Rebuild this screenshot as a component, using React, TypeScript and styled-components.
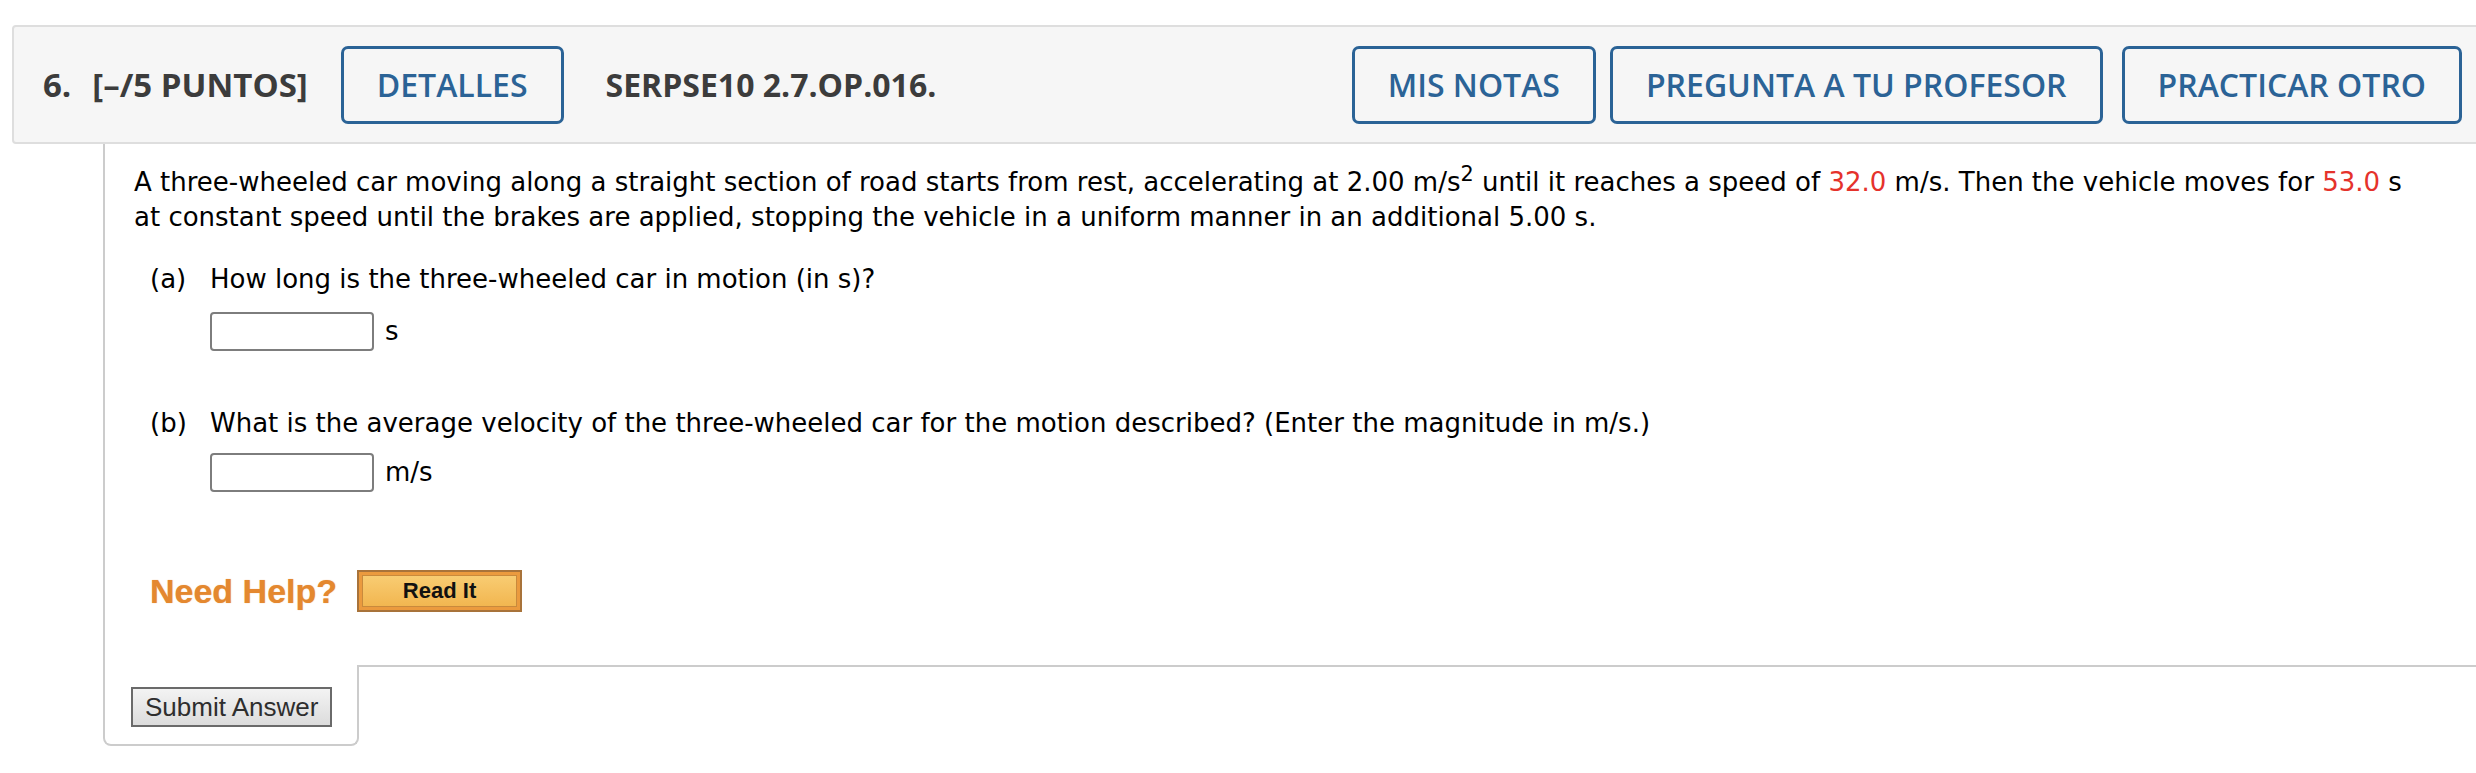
import React from "react";
import styled, { createGlobalStyle } from "styled-components";

const GlobalStyle = createGlobalStyle`
  html, body {
    margin: 0;
    padding: 0;
    background: #ffffff;
    overflow-x: hidden;
  }
  body {
    font-family: "DejaVu Sans", Verdana, sans-serif;
  }
`;

// Sub-component for the grey question header
const HeaderBar = styled.header`
  display: flex;
  align-items: center;
  height: 115px;
  margin-top: 25px;
  padding: 0 44px 0 29px;
  background: #f6f6f6;
  border: 2px solid #dedede;
  border-radius: 4px;
  font-family: "Open Sans", "Liberation Sans", sans-serif;
  color: #3c3c3c;
`;

const Number = styled.span`
  font-size: 33px;
  font-weight: 700;
  margin-right: 21px;
`;

const Points = styled.span`
  font-size: 33px;
  font-weight: 700;
  margin-right: 33px;
`;

const Code = styled.span`
  font-size: 32px;
  font-weight: 700;
  margin-left: 42px;
`;

const Spacer = styled.div`
  flex: 1;
`;

const OutlineButton = styled.button<{ $gap?: number }>`
  height: 78px;
  padding: 0 33px;
  margin-left: ${(p) => p.$gap ?? 0}px;
  background: transparent;
  border: 3px solid #2b6396;
  border-radius: 7px;
  color: #2b6396;
  font-family: "Open Sans", "Liberation Sans", sans-serif;
  font-size: 32px;
  font-weight: 600;
  cursor: pointer;
`;

const Frame = styled.div`
  margin-left: 12px;
  width: calc(100vw + 20px);
`;

const Body = styled.section`
  margin-left: 91px;
  padding: 21px 0 53px 29px;
  border-left: 2px solid #cccccc;
  color: #000000;
  font-size: 26px;
  line-height: 35px;
`;

const Intro = styled.p`
  margin: 0 0 27px;
`;

const Hot = styled.span`
  color: #e5322b;
`;

const Sup = styled.sup`
  font-size: 0.8em;
  line-height: 0;
  vertical-align: 0.5em;
`;

const Part = styled.div`
  display: grid;
  grid-template-columns: 60px auto;
  margin-left: 16px;
  margin-bottom: 55px;
`;

const Letter = styled.span``;

const AnswerRow = styled.div<{ $top: number }>`
  grid-column: 2;
  display: flex;
  align-items: center;
  gap: 11px;
  margin-top: ${(p) => p.$top}px;
`;

const Field = styled.input`
  width: 164px;
  height: 39px;
  box-sizing: border-box;
  border: 2px solid #7d7d7d;
  border-radius: 4px;
  background: #ffffff;
`;

const HelpRow = styled.div`
  display: flex;
  align-items: center;
  gap: 20px;
  margin: 78px 0 0 16px;
`;

const HelpLabel = styled.span`
  font-family: "Liberation Sans", Arial, sans-serif;
  font-weight: 700;
  font-size: 34px;
  line-height: 40px;
  color: #e4882f;
  text-shadow: 0 0 1px rgba(228, 136, 47, 0.7);
`;

const ReadButton = styled.button`
  width: 165px;
  height: 42px;
  padding: 3px;
  background: #eb9a3e;
  border: 2px solid #a8733a;
  cursor: pointer;

  span {
    display: flex;
    align-items: center;
    justify-content: center;
    height: 100%;
    box-sizing: border-box;
    border: 1px solid #c98a3c;
    background: linear-gradient(#f8cc72, #f2b650);
    font-family: "Liberation Sans", Arial, sans-serif;
    font-weight: 700;
    font-size: 22px;
    color: #111111;
  }
`;

const Footer = styled.div`
  display: flex;
  margin-left: 91px;
`;

const SubmitTab = styled.div`
  width: 256px;
  box-sizing: border-box;
  padding: 22px 0 17px 26px;
  border: 2px solid #cccccc;
  border-top: none;
  border-radius: 0 0 8px 8px;
`;

const Filler = styled.div`
  flex: 1;
  border-top: 2px solid #cccccc;
  margin-left: -2px;
`;

const SubmitButton = styled.button`
  height: 40px;
  padding: 0 12px;
  background: linear-gradient(#f3f3f3, #dcdcdc);
  border: 2px solid #6a6a6a;
  font-family: "Liberation Sans", Arial, sans-serif;
  font-size: 26px;
  color: #2e2e2e;
  cursor: pointer;
`;

const App: React.FC = () => {
  return (
    <>
      <GlobalStyle />
      <Frame>
        <HeaderBar>
          <Number>6.</Number>
          <Points>[–/5 PUNTOS]</Points>
          <OutlineButton>DETALLES</OutlineButton>
          <Code>SERPSE10 2.7.OP.016.</Code>
          <Spacer />
          <OutlineButton>MIS NOTAS</OutlineButton>
          <OutlineButton $gap={14}>PREGUNTA A TU PROFESOR</OutlineButton>
          <OutlineButton $gap={19}>PRACTICAR OTRO</OutlineButton>
        </HeaderBar>

        <Body>
          <Intro>
            A three-wheeled car moving along a straight section of road starts
            from rest, accelerating at 2.00 m/s<Sup>2</Sup> until it reaches a
            speed of <Hot>32.0</Hot> m/s. Then the vehicle moves for{" "}
            <Hot>53.0</Hot> s<br />
            at constant speed until the brakes are applied, stopping the vehicle
            in a uniform manner in an additional 5.00 s.
          </Intro>

          <Part>
            <Letter>(a)</Letter>
            <span>How long is the three-wheeled car in motion (in s)?</span>
            <AnswerRow $top={15}>
              <Field type="text" />
              <span>s</span>
            </AnswerRow>
          </Part>

          <Part>
            <Letter>(b)</Letter>
            <span>
              What is the average velocity of the three-wheeled car for the
              motion described? (Enter the magnitude in m/s.)
            </span>
            <AnswerRow $top={12}>
              <Field type="text" />
              <span>m/s</span>
            </AnswerRow>
          </Part>

          <HelpRow>
            <HelpLabel>Need Help?</HelpLabel>
            <ReadButton>
              <span>Read It</span>
            </ReadButton>
          </HelpRow>
        </Body>

        <Footer>
          <SubmitTab>
            <SubmitButton>Submit Answer</SubmitButton>
          </SubmitTab>
          <Filler />
        </Footer>
      </Frame>
    </>
  );
};

export default App;
